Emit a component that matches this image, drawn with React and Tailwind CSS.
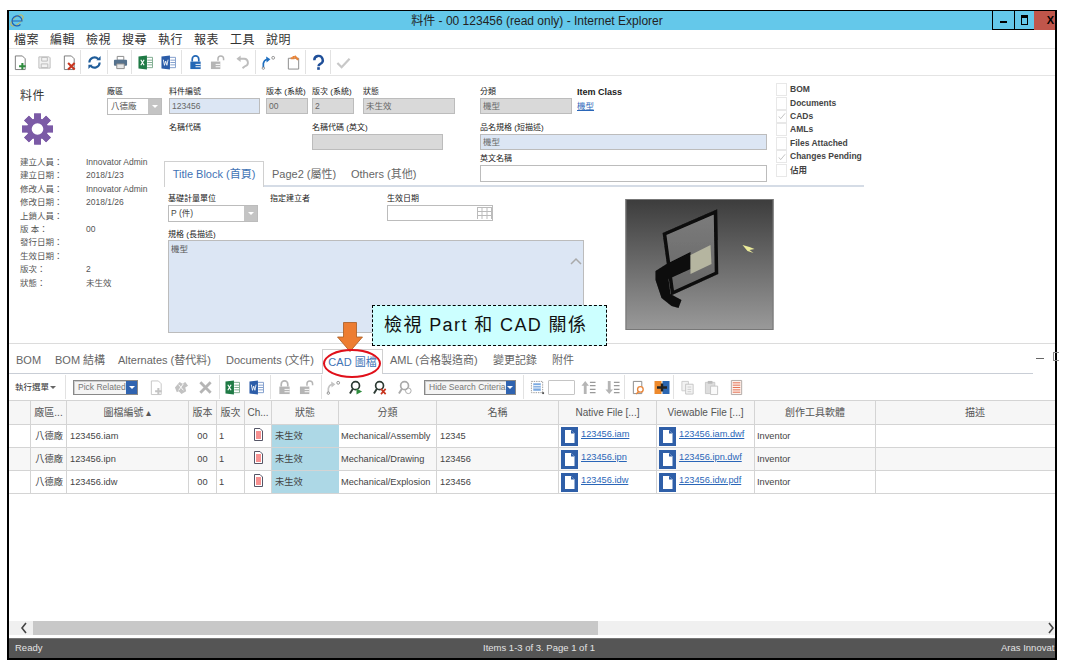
import React from "react";

const tabs = [
  { name: "BOM", w: "w-[39px] ml-[7px]" },
  { name: "BOM 結構", w: "w-[63px]" },
  { name: "Alternates (替代料)", w: "w-[108px]" },
  { name: "Documents (文件)", w: "w-[96px]" },
];

const infoRows = [
  ["建立人員：", "Innovator Admin"],
  ["建立日期：", "2018/1/23"],
  ["修改人員：", "Innovator Admin"],
  ["修改日期：", "2018/1/26"],
  ["上鎖人員：", ""],
  ["版 本：", "00"],
  ["發行日期：", ""],
  ["生效日期：", ""],
  ["版次：", "2"],
  ["狀態：", "未生效"],
];

const checks = [
  ["BOM", false],
  ["Documents", false],
  ["CADs", true],
  ["AMLs", false],
  ["Files Attached", false],
  ["Changes Pending", true],
  ["佔用", false],
];

const rows = [
  { num: "123456.iam", type: "Mechanical/Assembly", name: "12345", native: "123456.iam", view: "123456.iam.dwf" },
  { num: "123456.ipn", type: "Mechanical/Drawing", name: "123456", native: "123456.ipn", view: "123456.ipn.dwf" },
  { num: "123456.idw", type: "Mechanical/Explosion", name: "123456", native: "123456.idw", view: "123456.idw.pdf" },
];

const gridCols = "grid grid-cols-[22px_36px_122px_28px_28px_27px_67px_98px_122px_98px_98px_121px_1fr]";
const cell = "border-r border-[#d4d4d4] flex items-center pt-px whitespace-nowrap overflow-hidden";

function Svg({ className = "", children, w = "w-[15px]" }) {
  return (
    <svg viewBox="0 0 16 16" className={`${w} h-[17px] shrink-0 ${className}`} fill="none">
      {children}
    </svg>
  );
}

const Doc = ({ c = "#777" }) => <path d="M2.500 1h7.500l3 3v11.500H2.500z" fill="#fff" stroke={c} strokeWidth="1" />;

function NewDoc({ className, c = "#777", p = "#2e8b3d" }) {
  return (
    <Svg className={className}>
      <Doc c={c} />
      <path d="M10 8.500v7M6.500 12h7" stroke={p} strokeWidth="2.200" />
    </Svg>
  );
}
function SaveIcon({ className }) {
  return (
    <Svg className={className}>
      <path d="M2 2h11l1 1v11H2z" fill="#f2f2f2" stroke="#bbb" />
      <path d="M5 2.500h6v4H5zM4.500 9.500h7v4h-7z" stroke="#bbb" />
    </Svg>
  );
}
function DocX({ className }) {
  return (
    <Svg className={className}>
      <Doc />
      <path d="M6.500 8.500l7 7M13.500 8.500l-7 7" stroke="#c8351f" strokeWidth="2.200" />
    </Svg>
  );
}
function Refresh({ className }) {
  return (
    <Svg className={className}>
      <path d="M2.500 8a5.500 5.500 0 0 1 9.500-3.700M13.500 8A5.500 5.500 0 0 1 4 11.700" stroke="#1f5c99" strokeWidth="2.200" />
      <path d="M10 5.500h4.500V1zM6 10.500H1.500V15z" fill="#1f5c99" />
    </Svg>
  );
}
function Printer({ className }) {
  return (
    <Svg className={className}>
      <path d="M4.500 1.500h7v4h-7z" fill="#fff" stroke="#888" />
      <rect x="1" y="5" width="14" height="6.500" rx="1" fill="#55718c" />
      <path d="M4 9.500h8v5H4z" fill="#e8e8e8" stroke="#888" />
    </Svg>
  );
}
function Excel({ className }) {
  return (
    <Svg className={className}>
      <path d="M9 2.500h6.500v11H9z" fill="#fff" stroke="#7aa98b" />
      <path d="M10 5.500h5M10 8h5M10 10.500h5" stroke="#7aa98b" />
      <path d="M0.500 1.500l9-1v15l-9-1z" fill="#1f7a45" />
      <path d="M3 5l3.500 6M6.500 5L3 11" stroke="#fff" strokeWidth="1.200" />
    </Svg>
  );
}
function Word({ className }) {
  return (
    <Svg className={className}>
      <path d="M9 2.500h6.500v11H9z" fill="#fff" stroke="#7d9bcb" />
      <path d="M10 5.500h5M10 8h5M10 10.500h5" stroke="#7d9bcb" />
      <path d="M0.500 1.500l9-1v15l-9-1z" fill="#2b5ca8" />
      <path d="M2.500 5l1.200 6 1.300-4.500L6.300 11l1.200-6" stroke="#fff" strokeWidth="0.900" />
    </Svg>
  );
}
function Lock({ className, c = "#2367b5" }) {
  return (
    <Svg className={className}>
      <path d="M4.500 7V4.500a3.500 3.500 0 0 1 7 0V7" stroke={c} strokeWidth="1.800" />
      <path d="M2.500 7h11v8h-11z" fill={c} />
      <path d="M8 10h5.500M8 12.500h5.500" stroke="#fff" />
    </Svg>
  );
}
function Unlock({ className, c = "#b5b5b5" }) {
  return (
    <Svg className={className}>
      <path d="M8.500 6V4a3 3 0 0 1 6 0v1.500" stroke={c} strokeWidth="1.600" />
      <path d="M1 7h10v8H1z" fill={c} />
      <path d="M6 10h5M6 12.500h5" stroke="#fff" />
    </Svg>
  );
}
function Undo({ className }) {
  return (
    <Svg className={className}>
      <path d="M5 4h5a4 4 0 0 1 1 7.800L8 14" stroke="#bdbdbd" strokeWidth="2" />
      <path d="M6 0.500v7L1.500 4z" fill="#bdbdbd" />
    </Svg>
  );
}
function Curve({ className, c = "#1f6fc0" }) {
  return (
    <Svg className={className}>
      <path d="M2.500 13V9a6 6 0 0 1 4-4.500" stroke={c} strokeWidth="1.800" />
      <path d="M5.500 1.500L10 4.500 6 8z" fill={c} />
      <circle cx="2.500" cy="14" r="1.300" stroke="#777" strokeWidth="0.800" />
      <circle cx="13" cy="3" r="1.500" stroke="#777" strokeWidth="0.800" />
    </Svg>
  );
}
function DocOrange({ className }) {
  return (
    <Svg className={className}>
      <path d="M2.500 3.500h11v11.500h-11z" fill="#fff" stroke="#888" />
      <path d="M5 3.500h3V1" stroke="#e8853a" strokeWidth="2" />
      <path d="M9 1l4 4" stroke="#e8853a" strokeWidth="2.400" />
    </Svg>
  );
}
function Question({ className }) {
  return (
    <Svg className={className}>
      <path d="M3.500 5.500a4.500 4.500 0 1 1 6.500 4c-1.500.8-2 1.300-2 2.500" stroke="#1f4f99" strokeWidth="2.600" />
      <rect x="6.600" y="13" width="2.800" height="2.800" fill="#1f4f99" />
    </Svg>
  );
}
function Check({ className }) {
  return (
    <Svg className={className}>
      <path d="M1.500 8.500l4.500 4.500 8.500-9" stroke="#c8c8c8" strokeWidth="2.400" />
    </Svg>
  );
}
function Puzzle({ className }) {
  return (
    <Svg className={className}>
      <path d="M1 8l5-6 3 2 3-2 3 4-3 2 1 4-5 3-3-3-2 1z" fill="#c2c2c2" />
      <path d="M5 5l5 6M10 4l-5 7" stroke="#fff" />
    </Svg>
  );
}
function BigX({ className }) {
  return (
    <Svg className={className}>
      <path d="M2.500 2.500l11 11M13.500 2.500l-11 11" stroke="#b5b5b5" strokeWidth="3" />
    </Svg>
  );
}
function SearchMark({ className, mark }) {
  const c = mark === "none" ? "#aaa" : "#2c3a33";
  return (
    <Svg className={className}>
      <circle cx="7" cy="6" r="4.200" stroke={c} strokeWidth="1.800" />
      <path d="M4 9.500L1 14.500" stroke={c} strokeWidth="2" />
      {mark === "go" && <path d="M8 9v6.500l6-3.200z" fill="#2e8b3d" />}
      {mark === "x" && <path d="M8.500 9.500l5 5.500M13.500 9.500l-5 5.500" stroke="#c8351f" strokeWidth="1.800" />}
      {mark === "none" && <circle cx="11" cy="11.500" r="3" stroke="#aaa" />}
    </Svg>
  );
}
function ListBlue({ className }) {
  return (
    <Svg className={className}>
      <path d="M1.500 1.500h12v12h-12z" stroke="#999" strokeDasharray="1.500 1" />
      <path d="M3.500 3.500h8v8h-8z" fill="#7ba9e0" />
      <path d="M3.500 6h8M3.500 8.500h8" stroke="#fff" />
      <rect x="13" y="13" width="2" height="2" fill="#555" />
    </Svg>
  );
}
function SortIcon({ className, up }) {
  return (
    <Svg className={className}>
      {up ? <path d="M4.500 1l4 5H6v9H3V6H.5z" fill="#b5b5b5" /> : <path d="M4.500 15l4-5H6V1H3v9H.5z" fill="#b5b5b5" />}
      <path d="M9.500 2.500h6M9.500 6h6M9.500 10h6M9.500 13.500h6" stroke="#999" strokeWidth="1.400" />
    </Svg>
  );
}
function DocSearch({ className }) {
  return (
    <Svg className={className}>
      <path d="M2.500 1.500h9v13h-9z" fill="#fff" stroke="#888" />
      <circle cx="10" cy="10" r="3" fill="#fff" stroke="#e8853a" strokeWidth="1.400" />
      <path d="M8 12.500l-2.500 2.500" stroke="#e8853a" strokeWidth="1.400" />
    </Svg>
  );
}
function OrangeBlue({ className }) {
  return (
    <Svg className={className} w="w-[16px]">
      <rect x="0.500" y="1.500" width="7" height="13" fill="#ee8a2c" />
      <rect x="8.500" y="1.500" width="7" height="13" fill="#2b66b1" />
      <path d="M3 8h10M8 4v8" stroke="#222" strokeWidth="2.400" />
    </Svg>
  );
}
function CopyIcon({ className }) {
  return (
    <Svg className={className}>
      <path d="M2 1.500h7v10H2z" fill="#f2f2f2" stroke="#ccc" />
      <path d="M6 4.500h8v10.500H6z" fill="#f4f4f4" stroke="#c4c4c4" />
      <path d="M8 7.500h4M8 10h4M8 12.500h4" stroke="#ccc" />
    </Svg>
  );
}
function PasteIcon({ className }) {
  return (
    <Svg className={className}>
      <path d="M1.500 2.500h10v12h-10z" fill="#ddd" stroke="#c8c8c8" />
      <path d="M4 1h5v3H4z" fill="#bbb" />
      <path d="M7 6.500h7.500v9H7z" fill="#fafafa" stroke="#c4c4c4" />
    </Svg>
  );
}
function DocLines({ className }) {
  return (
    <Svg className={className}>
      <path d="M2.500 0.500h11v15h-11z" fill="#fdf1ec" stroke="#b0a8a4" />
      <path d="M4 3h8M4 5.500h8M4 8h8M4 10.500h8M4 13h8" stroke="#e4694a" />
    </Svg>
  );
}

function Gear() {
  return (
    <svg viewBox="0 0 32 34" className="w-[31px] h-[34px] ml-[2px] -mt-[3px] block">
      {[0, 45, 90, 135, 180, 225, 270, 315].map((a) => (
        <rect key={a} x="12.500" y="1" width="7" height="32" fill="#7b5aa6" transform={`rotate(${a} 16 17)`} />
      ))}
      <circle cx="16" cy="17" r="11" fill="#7b5aa6" />
      <circle cx="16" cy="17" r="6" fill="#fff" />
    </svg>
  );
}

function Sep({ className }) {
  return <div className={`w-px h-[24px] bg-[#e2e2e2] shrink-0 ${className}`} />;
}

function Label({ children, className = "" }) {
  return <div className={`h-[12px] text-[8px] leading-[12px] text-[#222] whitespace-nowrap ${className}`}>{children}</div>;
}

function Input({ className = "", children }) {
  return (
    <div className={`border border-[#bcbcbc] text-[8.500px] leading-[14px] pl-[2px] text-[#666] ${className}`}>{children}</div>
  );
}

function DropArrow({ w = "w-[13px]" }) {
  return (
    <div className={`absolute right-0 top-0 bottom-0 ${w} bg-[#c4c4c4] flex items-center justify-center`}>
      <div className="w-0 h-0 border-l-[3px] border-r-[3px] border-t-[3px] border-l-transparent border-r-transparent border-t-white" />
    </div>
  );
}

function SelectBlue({ className, children }) {
  return (
    <div className={`h-[15px] border border-[#888] bg-[#f4f4f4] shadow-[inset_1px_1px_0_#ccc] flex items-center justify-between text-[8.500px] text-[#777] shrink-0 ${className}`}>
      <span className="pl-[4px] whitespace-nowrap">{children}</span>
      <div className="w-[11px] h-full bg-[#2f63b0] flex items-center justify-center">
        <div className="w-0 h-0 border-l-[3px] border-r-[3px] border-t-[3px] border-l-transparent border-r-transparent border-t-white" />
      </div>
    </div>
  );
}

function FileIcon() {
  return (
    <svg viewBox="0 0 17 19" className="w-[17px] h-[19px] shrink-0">
      <rect width="17" height="19" fill="#2f5fa8" />
      <path d="M4 3h6l3.500 3.500V16H4z" fill="#fff" />
      <path d="M10 3v3.500h3.500z" fill="#2f5fa8" />
    </svg>
  );
}

function ChIcon() {
  return (
    <svg viewBox="0 0 9 13" className="w-[9px] h-[13px]">
      <path d="M.5.500h5.500l2.500 2.500v9.500H.5z" fill="#fff" stroke="#556" />
      <path d="M2 4h5M2 6h5M2 8h5M2 10h5" stroke="#e22" />
    </svg>
  );
}

function ModelPicture() {
  return (
    <svg viewBox="0 0 148 131" className="w-[149px] h-[131px] shrink-0 ml-[41px] mt-[12px]">
      <defs>
        <linearGradient id="bg" x1="0" y1="0" x2="0" y2="1">
          <stop offset="0" stopColor="#3c3c3c" />
          <stop offset="1" stopColor="#9a9a9a" />
        </linearGradient>
        <linearGradient id="glass" x1="0" y1="0" x2="0" y2="1">
          <stop offset="0" stopColor="#7c7c7c" />
          <stop offset="1" stopColor="#666" />
        </linearGradient>
        <filter id="soft">
          <feGaussianBlur stdDeviation="0.500" />
        </filter>
      </defs>
      <rect width="148" height="131" fill="url(#bg)" />
      <g filter="url(#soft)">
        <path d="M39 35L90 13l1 61-44 20z" fill="url(#glass)" stroke="#0a0a0a" strokeWidth="3.500" />
        <path d="M65 53v17L43 80l2 15 11 6-3 8-7-2-10-8-6-18V72l11-7z" fill="#0a0a0a" />
        <path d="M65 56l20-10 1 19-21 10z" fill="#b5b5a0" />
        <path d="M117 46l7 2 5 2-5 1 4 3-6-2z" fill="#ecec9a" />
      </g>
      <rect x="0.500" y="0.500" width="147" height="130" fill="none" stroke="#777" />
    </svg>
  );
}

export default function App() {
  return (
    <div className="relative w-[1066px] h-[664px] bg-white overflow-hidden font-['Liberation_Sans','Noto_Sans_CJK_TC',sans-serif] text-[#333]">
      <div className="ml-[7px] mt-[10px] w-[1050px] h-[650px] border-l-2 border-r-2 border-t border-b-2 border-black flex flex-col">
        {/* title bar */}
        <div className="h-[19px] bg-[#64c8ea] flex items-center shrink-0 relative">
          <svg viewBox="0 0 14 15" className="w-[14px] h-[15px] ml-px">
            <ellipse cx="7" cy="7.500" rx="7.500" ry="3.500" transform="rotate(-40 7 7.500)" fill="none" stroke="#e8b22c" strokeWidth="0.800" />
            <path d="M2.500 8h9.500a5 5 0 1 0-1.500 3.500" fill="none" stroke="#1f62b5" strokeWidth="1.200" />
          </svg>
          <div className="flex-1 text-center text-[12px] pl-[58px] text-[#222] whitespace-nowrap">料件 - 00 123456 (read only) - Internet Explorer</div>
          <div className="flex h-[19px] shrink-0">
            <div className="w-[22px] border-l border-b border-black flex items-center justify-center">
              <div className="w-[7px] h-[2px] bg-black mt-[3px]" />
            </div>
            <div className="w-[20px] border-l border-b border-black flex items-center justify-center">
              <div className="w-[7px] h-[10px] border border-black border-t-[3px]" />
            </div>
            <div className="w-[21px] bg-[#c0564b] text-[11px] font-bold text-black flex items-center justify-end pr-px overflow-hidden">X</div>
          </div>
        </div>

        {/* menu */}
        <div className="h-[19px] pt-px border-b border-[#e4e4e4] flex items-center pl-[5px] text-[12px] text-[#333] gap-[11px] shrink-0">
          {["檔案", "編輯", "檢視", "搜尋", "執行", "報表", "工具", "說明"].map((m) => (
            <span key={m} className="tracking-[0.500px]">{m}</span>
          ))}
        </div>

        {/* main toolbar */}
        <div className="h-[27px] border-b border-[#e4e4e4] flex items-center shrink-0">
          <NewDoc className="ml-[4px]" />
          <SaveIcon className="ml-[9px]" />
          <DocX className="ml-[10px]" />
          <Sep className="ml-[3px]" />
          <Refresh className="ml-[6px]" />
          <Sep className="ml-[5px]" />
          <Printer className="ml-[5px]" />
          <Sep className="ml-[3px]" />
          <Excel className="ml-[6px]" />
          <Word className="ml-[8px]" />
          <Sep className="ml-[5px]" />
          <Lock className="ml-[6px]" />
          <Unlock className="ml-[7px]" />
          <Undo className="ml-[10px]" />
          <Sep className="ml-[5px]" />
          <Curve className="ml-[5px]" />
          <DocOrange className="ml-[10px]" />
          <Sep className="ml-[4px]" />
          <Question className="ml-[5px]" />
          <Sep className="ml-[4px]" />
          <Check className="ml-[5px]" />
        </div>

        {/* form */}
        <div className="h-[268px] border-b border-[#dcdcdc] flex shrink-0">
          <div className="w-[155px] pl-[11px] shrink-0">
            <div className="flex">
              <div className="w-[87px] pt-[12px] text-[12px] leading-[16px] text-[#333] tracking-[0.500px]">料件</div>
              <div className="pt-[10px] w-[55px]">
                <Label>廠區</Label>
                <div className="relative h-[17px] border border-[#bcbcbc] text-[8.500px] leading-[15px] pl-[3px] text-[#555]">
                  八德廠
                  <DropArrow />
                </div>
              </div>
            </div>
            <Gear />
            <div className="mt-[10px] text-[8.500px] text-[#555]">
              {infoRows.map(([k, v]) => (
                <div key={k} className="h-[13.400px] leading-[13px] flex whitespace-nowrap">
                  <span className="w-[66px]">{k}</span>
                  <span>{v}</span>
                </div>
              ))}
            </div>
          </div>

          <div className="w-[700px] shrink-0">
            <div className="h-[111px] border-b-2 border-[#d5dce6] flex">
              <div className="w-[316px] pl-[5px] flex flex-col shrink-0">
                <div className="flex pt-[10px]">
                  <div className="w-[91px] mr-[6px]">
                    <Label>料件編號</Label>
                    <Input className="h-[16px] bg-[#dce6f4]">123456</Input>
                  </div>
                  <div className="w-[42px] mr-[4px]">
                    <Label>版本 (系統)</Label>
                    <Input className="h-[16px] bg-[#d9d9d9]">00</Input>
                  </div>
                  <div className="w-[42px] mr-[9px]">
                    <Label>版次 (系統)</Label>
                    <Input className="h-[16px] bg-[#d9d9d9]">2</Input>
                  </div>
                  <div className="w-[92px]">
                    <Label>狀態</Label>
                    <Input className="h-[16px] bg-[#d9d9d9]">未生效</Input>
                  </div>
                </div>
                <div className="flex mt-[8px]">
                  <Label className="w-[143px] shrink-0">名稱代碼</Label>
                  <div className="w-[131px] shrink-0">
                    <Label>名稱代碼 (英文)</Label>
                    <Input className="h-[16px] bg-[#d9d9d9]" />
                  </div>
                </div>
                <div className="flex items-end text-[11px] mt-auto -mb-[2px] -ml-[5px]">
                  <div className="w-[100px] h-[26px] border border-b-0 border-[#d0d0d0] bg-white text-[#3f73b5] flex items-center justify-center whitespace-nowrap">Title Block (首頁)</div>
                  <div className="w-[79px] h-[26px] flex items-center ml-[8px] text-[#666] whitespace-nowrap">Page2 (屬性)</div>
                  <div className="h-[26px] flex items-center text-[#666] whitespace-nowrap">Others (其他)</div>
                </div>
              </div>

              <div className="w-[296px] shrink-0 pt-[10px]">
                <div className="flex">
                  <div className="w-[92px]">
                    <Label>分類</Label>
                    <Input className="h-[16px] bg-[#d9d9d9]">機型</Input>
                  </div>
                  <div className="ml-[5px]">
                    <div className="h-[12px] text-[9px] leading-[12px] font-bold text-[#222] whitespace-nowrap">Item Class</div>
                    <div className="text-[8.500px] leading-[16px] text-[#2a66b8] underline">機型</div>
                  </div>
                </div>
                <div className="mt-[8px]">
                  <Label>品名規格 (短描述)</Label>
                  <Input className="w-[287px] h-[16px] bg-[#dce6f4]">機型</Input>
                </div>
                <div className="mt-[3px]">
                  <Label>英文名稱</Label>
                  <Input className="w-[287px] h-[17px] bg-white" />
                </div>
              </div>

              <div className="pt-[7px] shrink-0 text-[8.500px] font-bold text-[#444]">
                {checks.map(([name, on]) => (
                  <div key={name} className="h-[13.400px] flex items-center whitespace-nowrap">
                    <div className="w-[11px] h-[13px] border border-[#e8e8e8] mr-[3px] flex items-center justify-center">
                      {on && (
                        <svg viewBox="0 0 9 9" className="w-[8px] h-[8px]">
                          <path d="M1 5l2 2.500L8 1.500" fill="none" stroke="#bbb" />
                        </svg>
                      )}
                    </div>
                    {name}
                  </div>
                ))}
              </div>
            </div>

            <div className="flex pl-[4px]">
              <div className="w-[416px] shrink-0">
                <div className="flex pt-[6px]">
                  <div className="w-[102px] shrink-0">
                    <Label>基礎計量單位</Label>
                    <div className="relative w-[90px] h-[17px] border border-[#bcbcbc] text-[8.500px] leading-[15px] pl-[2px] text-[#444]">
                      P (件)
                      <DropArrow />
                    </div>
                  </div>
                  <div className="w-[117px] shrink-0">
                    <Label>指定建立者</Label>
                  </div>
                  <div>
                    <Label>生效日期</Label>
                    <div className="relative w-[106px] h-[16px] border border-[#bcbcbc]">
                      <svg viewBox="0 0 15 12" className="absolute right-0 top-px w-[15px] h-[12px]">
                        <path d="M0 .5h15M0 4.500h15M0 8.500h15M.5 0v12M5 0v12M10 0v12M14.500 0v12" stroke="#bbb" />
                      </svg>
                    </div>
                  </div>
                </div>
                <Label className="mt-[7px]">規格 (長描述)</Label>
                <div className="relative h-[93px] -mt-px border border-[#bcbcbc] bg-[#dce6f4] text-[8.500px] leading-[14px] pl-[2px] pt-[1px] text-[#555]">
                  機型
                  <svg viewBox="0 0 12 8" className="absolute right-px top-[16px] w-[12px] h-[8px]">
                    <path d="M1 7l5-5 5 5" fill="none" stroke="#aaa" strokeWidth="1.500" />
                  </svg>
                </div>
              </div>
              <ModelPicture />
            </div>
          </div>
        </div>

        {/* relationship tabs */}
        <div className="h-[30px] flex shrink-0 relative">
          <div className="w-[1024px] border-b border-[#c9ced6] flex items-end text-[11px] text-[#666] shrink-0">
            {tabs.map((t) => (
              <div key={t.name} className={`h-[25px] flex items-center whitespace-nowrap ${t.w}`}>{t.name}</div>
            ))}
            <div className="w-[61px] h-[25px] -mb-px border border-b-0 border-[#d0d0d0] bg-white text-[#3f73b5] flex items-center justify-center whitespace-nowrap">CAD 圖檔</div>
            <div className="w-[103px] h-[25px] flex items-center ml-[7px] whitespace-nowrap">AML (合格製造商)</div>
            <div className="w-[59px] h-[25px] flex items-center whitespace-nowrap">變更記錄</div>
            <div className="h-[25px] flex items-center whitespace-nowrap">附件</div>
          </div>
          <div className="w-[8px] h-px bg-[#666] ml-[3px] mt-[14px] shrink-0" />
          <div className="w-[6px] h-[9px] border border-[#888] ml-[9px] mt-[8px] shrink-0 border-r-0" />
        </div>

        {/* grid toolbar */}
        <div className="h-[26px] flex items-center shrink-0">
          <span className="ml-[6px] text-[8.500px] text-[#333] whitespace-nowrap w-[33px]">執行選單</span>
          <div className="ml-[2px] w-0 h-0 border-l-[3px] border-r-[3px] border-t-[3px] border-l-transparent border-r-transparent border-t-[#666]" />
          <Sep className="ml-[9px]" />
          <SelectBlue className="ml-[7px] w-[65px]">Pick Related</SelectBlue>
          <NewDoc className="ml-[11px]" c="#c4c4c4" p="#c4c4c4" />
          <Puzzle className="ml-[10px]" />
          <BigX className="ml-[9px]" />
          <Sep className="ml-[6px]" />
          <Excel className="ml-[5px]" />
          <Word className="ml-[9px]" />
          <Sep className="ml-[6px]" />
          <Lock className="ml-[6px]" c="#b5b5b5" />
          <Unlock className="ml-[7px]" />
          <Sep className="ml-[7px]" />
          <Curve className="ml-[4px]" c="#c4c4c4" />
          <SearchMark className="ml-[8px]" mark="go" />
          <SearchMark className="ml-[9px]" mark="x" />
          <SearchMark className="ml-[10px]" mark="none" />
          <SelectBlue className="ml-[11px] w-[92px]">Hide Search Criteria</SelectBlue>
          <Sep className="ml-[7px]" />
          <ListBlue className="ml-[6px]" />
          <div className="ml-[3px] w-[27px] h-[15px] border border-[#c5c5c5] rounded-[1px] shrink-0" />
          <SortIcon className="ml-[6px]" up />
          <SortIcon className="ml-[9px]" />
          <Sep className="ml-[4px]" />
          <DocSearch className="ml-[6px]" />
          <OrangeBlue className="ml-[8px]" />
          <Sep className="ml-[3px]" />
          <CopyIcon className="ml-[6px]" />
          <PasteIcon className="ml-[9px]" />
          <DocLines className="ml-[10px]" />
        </div>

        {/* grid */}
        <div className={`${gridCols} h-[25px] bg-[#f6f6f6] border-y border-[#d4d4d4] text-[10px] text-[#555] shrink-0`}>
          {["", "廠區...", "圖檔編號 ▴", "版本", "版次", "Ch...", "狀態", "分類", "名稱", "Native File [...]", "Viewable File [...]", "創作工具軟體"].map((h, i) => (
            <div key={i} className="border-r border-[#d4d4d4] flex items-center justify-center whitespace-nowrap overflow-hidden">{h}</div>
          ))}
          <div className="flex items-center justify-center pl-[19px]">描述</div>
        </div>
        {rows.map((r, i) => (
          <div key={r.num} className={`${gridCols} h-[23px] border-b border-[#d4d4d4] text-[9.250px] text-[#444] shrink-0 ${i === 1 ? "bg-[#f7f7f7]" : "bg-white"}`}>
            <div className="border-r border-[#d4d4d4]" />
            <div className={`${cell} justify-end pr-[3px]`}>八德廠</div>
            <div className={`${cell} pl-[3px]`}>{r.num}</div>
            <div className={`${cell} justify-center`}>00</div>
            <div className={`${cell} pl-[2px]`}>1</div>
            <div className="border-r border-[#d4d4d4] flex items-center justify-center pb-[3px]"><ChIcon /></div>
            <div className="bg-[#add8e6] flex items-center pt-px pl-[3px] whitespace-nowrap">未生效</div>
            <div className={`${cell} pl-[2px]`}>{r.type}</div>
            <div className={`${cell} pl-[3px]`}>{r.name}</div>
            <div className="border-r border-[#d4d4d4] flex items-center pl-[2px] gap-[3px]">
              <FileIcon />
              <span className="text-[#2a66b8] underline pb-[2px]">{r.native}</span>
            </div>
            <div className="border-r border-[#d4d4d4] flex items-center pl-[2px] gap-[3px]">
              <FileIcon />
              <span className="text-[#2a66b8] underline pb-[2px] whitespace-nowrap">{r.view}</span>
            </div>
            <div className={`${cell} pl-[2px]`}>Inventor</div>
            <div />
          </div>
        ))}
        <div className="flex-1" />

        {/* scrollbar and status */}
        <div className="h-[14px] bg-[#f0f0f0] flex items-center shrink-0">
          <svg viewBox="0 0 8 12" className="w-[8px] h-[12px] ml-[11px] shrink-0">
            <path d="M6 1L2 6l4 5" fill="none" stroke="#444" strokeWidth="1.600" />
          </svg>
          <div className="ml-[5px] w-[565px] h-[14px] bg-[#c8c8c8] shrink-0" />
          <svg viewBox="0 0 8 12" className="w-[8px] h-[12px] ml-auto shrink-0">
            <path d="M2 1l4 5-4 5" fill="none" stroke="#444" strokeWidth="1.600" />
          </svg>
        </div>
        <div className="mt-[3px] h-[20px] bg-[#555555] border-t border-[#777] text-[9.500px] text-[#e4e4e4] flex items-center shrink-0 whitespace-nowrap">
          <span className="ml-[6px] w-[468px] shrink-0">Ready</span>
          <span className="w-[518px] shrink-0">Items 1-3 of 3. Page 1 of 1</span>
          <span className="shrink-0">Aras Innovat</span>
        </div>
      </div>

      {/* callout overlay */}
      <div className="absolute left-[372px] top-[305px] w-[235px] h-[41px] bg-[#ccffff] border border-dashed border-black flex items-center pl-[11px] text-[18px] text-[#111] tracking-[1.400px] whitespace-nowrap">
        檢視 Part 和 CAD 關係
      </div>
      <svg viewBox="0 0 26 30" className="absolute left-[337px] top-[322px] w-[26px] h-[30px]">
        <path d="M6.500.5h13V15h6L13 29.500.5 15h6z" fill="#ed7d31" stroke="#a85a20" strokeWidth="0.800" />
      </svg>
      <div className="absolute left-[323px] top-[349px] w-[58px] h-[29px] rounded-[50%] border-2 border-[#e0101a]" />
    </div>
  );
}
